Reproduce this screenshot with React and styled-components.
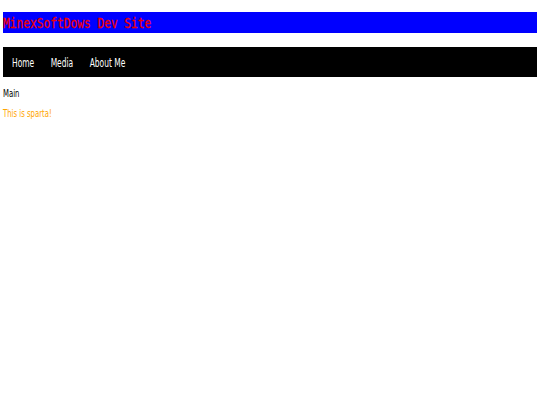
import React from "react";
import styled, { createGlobalStyle } from "styled-components";

const GlobalStyle = createGlobalStyle`
  body {
    margin: 0;
    padding: 12px 3px;
    background: #ffffff;
    font-family: "DejaVu Sans", sans-serif;
  }
`;

function App() {
  return (
    <>
      <GlobalStyle />
      <Header>
        <SiteTitle>MinexSoftDows Dev Site</SiteTitle>
      </Header>
      <Nav>
        <NavList>
          <NavLink href="#">Home</NavLink>
          <NavLink href="#">Media</NavLink>
          <NavLink href="#">About Me</NavLink>
        </NavList>
      </Nav>
      <Main>
        <MainLabel>Main</MainLabel>
        <Sparta>This is sparta!</Sparta>
      </Main>
    </>
  );
}

export default App;

const Header = styled.header`
  background-color: #0000ff;
  height: 21px;
  display: flex;
  align-items: center;
`;

// narrow "digital" look: squeeze the mono face horizontally
const SiteTitle = styled.h1`
  margin: 0;
  font-family: "DejaVu Sans Mono", monospace;
  font-size: 14px;
  font-weight: normal;
  color: #f00000;
  white-space: nowrap;
  -webkit-text-stroke: 0.3px #f00000;
  transform: scaleX(0.8);
  transform-origin: left center;
`;

const Nav = styled.nav`
  margin-top: 14px;
  background-color: #000000;
  height: 30px;
  display: flex;
  align-items: center;
  padding-left: 9px;
`;

const NavList = styled.div`
  display: flex;
  gap: 27.5px;
  white-space: nowrap;
  transform: scaleX(0.6);
  transform-origin: left center;
`;

const NavLink = styled.a`
  color: #ffffff;
  text-decoration: none;
  font-size: 12.5px;
`;

const Main = styled.main`
  padding-top: 11px;
  display: flex;
  flex-direction: column;
  align-items: flex-start;
  gap: 9px;
`;

const MainLabel = styled.div`
  font-size: 10px;
  color: #000000;
  transform: scaleX(0.69);
  transform-origin: left center;
`;

const Sparta = styled.p`
  margin: 0;
  font-size: 10px;
  color: #ffa500;
  transform: scaleX(0.69);
  transform-origin: left center;
`;
